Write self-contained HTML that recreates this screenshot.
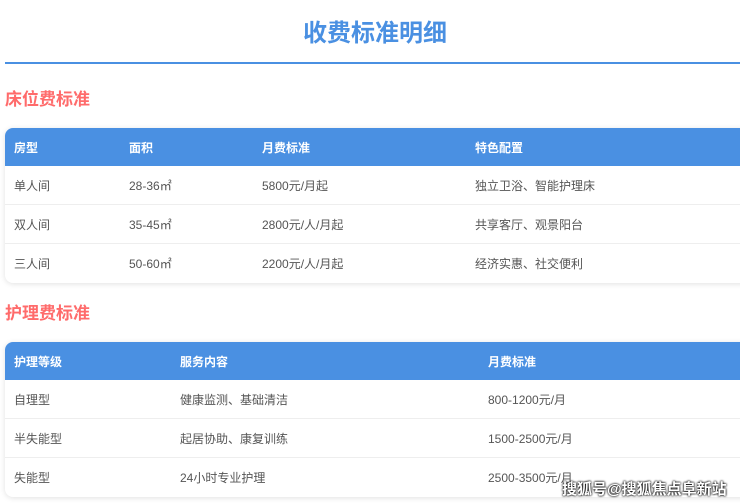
<!DOCTYPE html>
<html><head><meta charset="utf-8"><style>
*{margin:0;padding:0;box-sizing:border-box}
body{width:740px;height:504px;overflow:hidden;background:#fff;font-family:"Liberation Sans","Noto Sans CJK SC",sans-serif;position:relative}
h1{position:absolute;top:18px;left:0;width:750px;text-align:center;font-size:24px;color:#4a90e2;font-weight:bold;line-height:32px}
.line{position:absolute;top:62px;left:5px;width:740px;height:2px;background:#4a90e2}
h2{position:absolute;left:5px;font-size:17px;color:#ff6b6b;font-weight:bold;line-height:24px}
.tbl{position:absolute;left:5px;width:760px;border-radius:8px;overflow:hidden;box-shadow:0 1px 6px rgba(0,0,0,.12);background:#fff}
.row{height:39px;position:relative;border-bottom:1px solid #eee;font-size:12px;color:#555}
.row:last-child{border-bottom:none}
.hd{background:#4a90e2;color:#fff;font-weight:bold;height:38px;border:none}
.row span{position:absolute;top:1px;line-height:38px}
.wm{position:absolute;left:562px;top:478px;font-size:15px;color:#fff;font-weight:bold;text-shadow:0 0 2px #000,0 0 2px #000}
</style></head><body>
<h1>收费标准明细</h1>
<div class="line"></div>
<h2 style="top:88px">床位费标准</h2>
<div class="tbl" style="top:128px">
<div class="row hd"><span style="left:9px">房型</span><span style="left:124px">面积</span><span style="left:257px">月费标准</span><span style="left:470px">特色配置</span></div>
<div class="row"><span style="left:9px">单人间</span><span style="left:124px">28-36㎡</span><span style="left:257px">5800元/月起</span><span style="left:470px">独立卫浴、智能护理床</span></div>
<div class="row"><span style="left:9px">双人间</span><span style="left:124px">35-45㎡</span><span style="left:257px">2800元/人/月起</span><span style="left:470px">共享客厅、观景阳台</span></div>
<div class="row"><span style="left:9px">三人间</span><span style="left:124px">50-60㎡</span><span style="left:257px">2200元/人/月起</span><span style="left:470px">经济实惠、社交便利</span></div>
</div>
<h2 style="top:302px">护理费标准</h2>
<div class="tbl" style="top:342px">
<div class="row hd"><span style="left:9px">护理等级</span><span style="left:175px">服务内容</span><span style="left:483px">月费标准</span></div>
<div class="row"><span style="left:9px">自理型</span><span style="left:175px">健康监测、基础清洁</span><span style="left:483px">800-1200元/月</span></div>
<div class="row"><span style="left:9px">半失能型</span><span style="left:175px">起居协助、康复训练</span><span style="left:483px">1500-2500元/月</span></div>
<div class="row"><span style="left:9px">失能型</span><span style="left:175px">24小时专业护理</span><span style="left:483px">2500-3500元/月</span></div>
</div>
<div class="wm">搜狐号@搜狐焦点阜新站</div>
</body></html>
